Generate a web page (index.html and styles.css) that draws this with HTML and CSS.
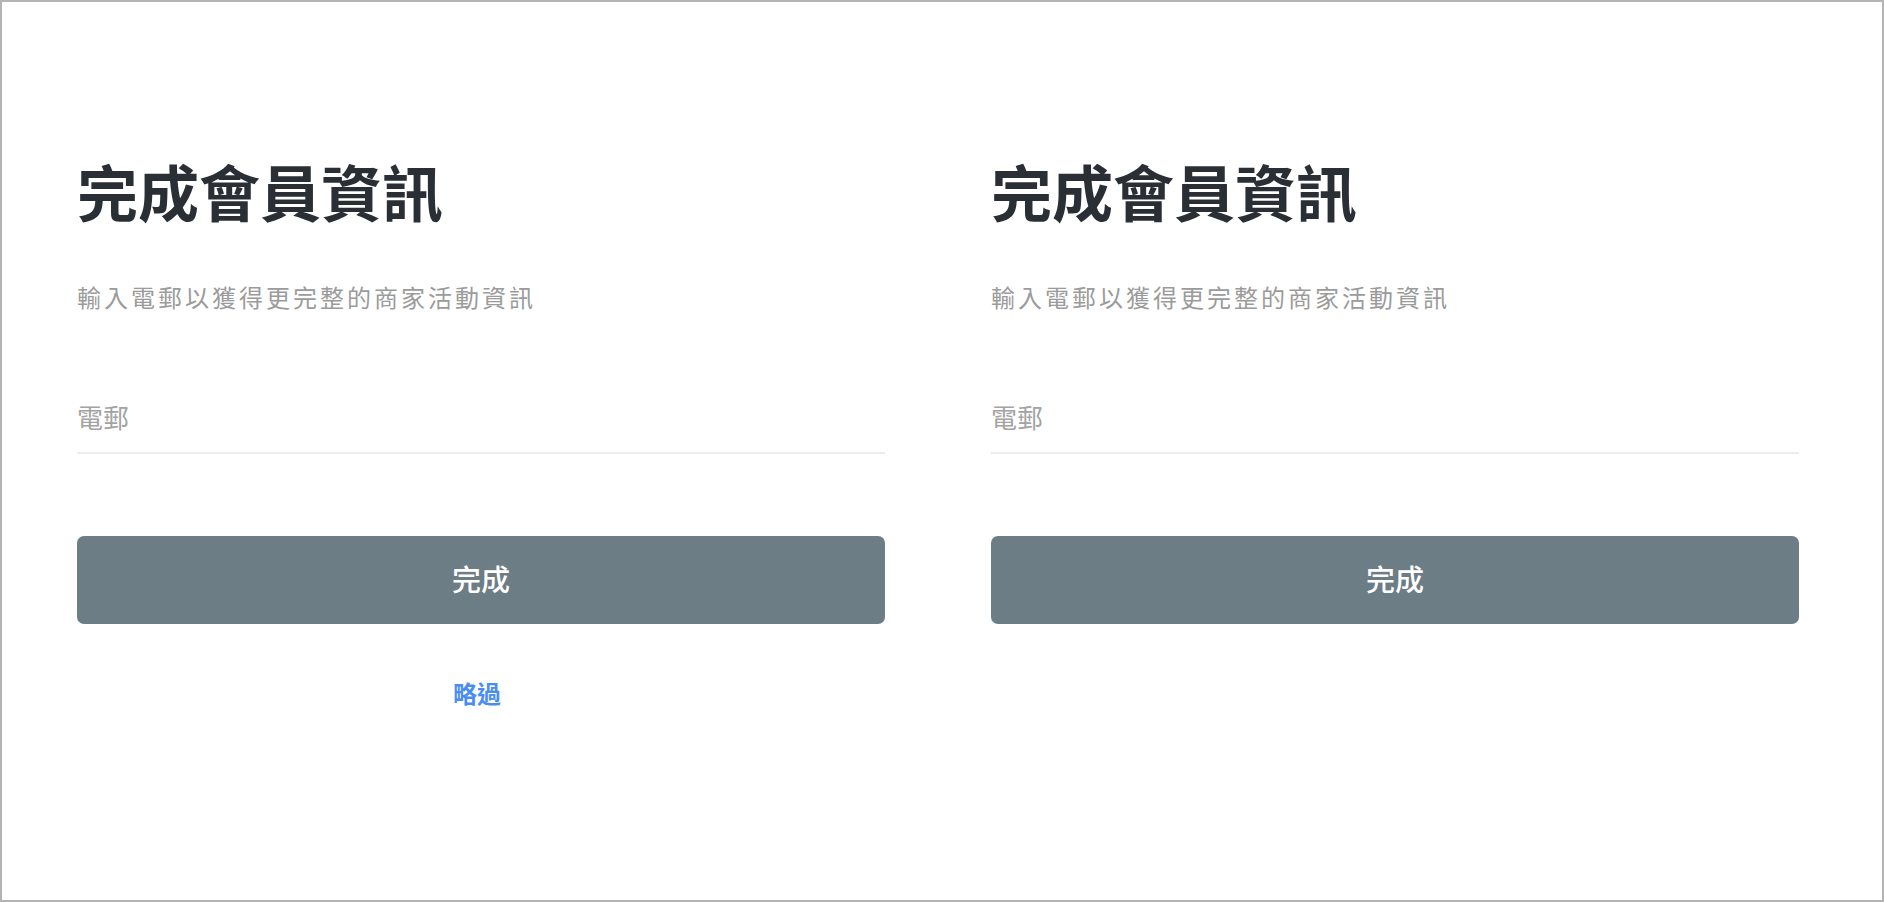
FILE: index.html
```html
<!DOCTYPE html>
<html lang="zh-Hant">
<head>
<meta charset="utf-8">
<title>完成會員資訊</title>
<link rel="stylesheet" href="styles.css">
</head>
<body>
<div class="frame">
  <section class="panel">
    <h1 class="title">完成會員資訊</h1>
    <p class="subtitle">輸入電郵以獲得更完整的商家活動資訊</p>
    <label class="field"><span class="field-label">電郵</span></label>
    <button class="btn" type="button">完成</button>
    <a class="skip" href="#">略過</a>
  </section>
  <section class="panel">
    <h1 class="title">完成會員資訊</h1>
    <p class="subtitle">輸入電郵以獲得更完整的商家活動資訊</p>
    <label class="field"><span class="field-label">電郵</span></label>
    <button class="btn" type="button">完成</button>
  </section>
</div>
</body>
</html>
```

FILE: styles.css
```css
html, body {
  margin: 0;
  padding: 0;
  background: #ffffff;
}

body {
  font-family: "Noto Sans CJK TC", "Noto Sans", sans-serif;
}

.frame {
  box-sizing: border-box;
  width: 1884px;
  height: 902px;
  border: 2px solid #b4b4b4;
  padding: 154px 0 0 75px;
  display: flex;
  gap: 106px;
  overflow: hidden;
}

.panel {
  width: 808px;
  display: flex;
  flex-direction: column;
}

.title {
  margin: 0;
  font-size: 61px;
  line-height: 70px;
  font-weight: 700;
  color: #2a2e35;
}

.subtitle {
  margin: 56px 0 0;
  font-size: 24px;
  line-height: 30px;
  letter-spacing: 3px;
  color: #9b9b9b;
}

.field {
  display: block;
  margin-top: 88px;
  padding-bottom: 18px;
  border-bottom: 2px solid #e9edf1;
}

.field-label {
  display: block;
  font-size: 26px;
  line-height: 34px;
  color: #a3a3a3;
}

.btn {
  margin-top: 82px;
  height: 88px;
  width: 100%;
  border: none;
  border-radius: 7px;
  background: #6d7d86;
  color: #ffffff;
  font-family: "Noto Sans CJK TC", "Noto Sans", sans-serif;
  font-size: 29px;
  font-weight: 500;
  padding: 0 0 4px;
}

.skip {
  align-self: center;
  margin-top: 54px;
  margin-right: 8px;
  font-size: 24px;
  line-height: 30px;
  font-weight: 700;
  color: #4a8df2;
  text-decoration: none;
}
```
